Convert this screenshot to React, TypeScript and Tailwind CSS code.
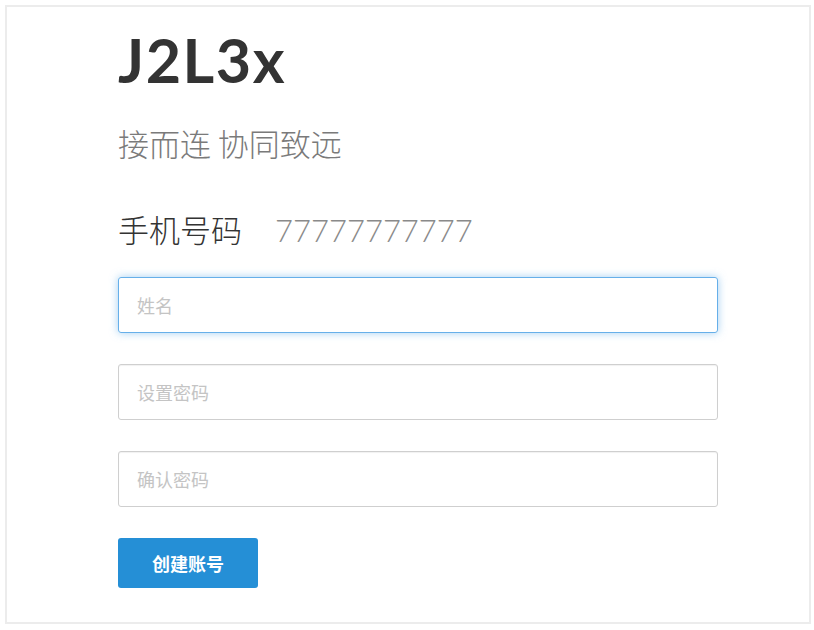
export default function App() {
  const fields = [
    { placeholder: "姓名", focused: true },
    { placeholder: "设置密码", focused: false },
    { placeholder: "确认密码", focused: false },
  ];

  return (
    <div className="w-[814px] h-[630px] bg-white p-[5px] font-['Lato','Noto_Sans_CJK_SC',sans-serif]">
      {/* Card */}
      <div className="h-[619px] w-[806px] border-2 border-[#ececec] pl-[111px] pt-[18px]">
        <h1 className="text-[61px] leading-[70px] font-bold text-[#333] tracking-[1.5px]">J2L3x</h1>

        <p className="mt-[30px] text-[31px] leading-[36px] text-[#7a7a7a] font-['Noto_Sans_CJK_SC',sans-serif] font-light">
          接而连 协同致远
        </p>

        <div className="mt-[50px] flex items-baseline gap-[33px]">
          <span className="text-[31px] leading-[36px] text-[#333] font-['Noto_Sans_CJK_SC',sans-serif] font-light">
            手机号码
          </span>
          <span className="text-[31px] leading-[36px] text-[#8a8a8a] font-light">77777777777</span>
        </div>

        <div className="mt-[29px] flex flex-col gap-[31px]">
          {fields.map((f, i) => (
            <input
              key={i}
              type={i === 0 ? "text" : "password"}
              placeholder={f.placeholder}
              className={
                f.focused
                  ? "w-[600px] h-[56px] rounded-[3px] border border-[#66afe9] px-[18px] text-[18px] outline-none shadow-[0_0_8px_rgba(102,175,233,0.6)] placeholder:text-[#c4c4c4] font-['Noto_Sans_CJK_SC',sans-serif]"
                  : "w-[600px] h-[56px] rounded-[3px] border border-[#cfcfcf] px-[18px] text-[18px] outline-none shadow-[inset_0_1px_1px_rgba(0,0,0,0.06)] placeholder:text-[#c4c4c4] font-['Noto_Sans_CJK_SC',sans-serif]"
              }
            />
          ))}
        </div>

        <button className="mt-[31px] w-[140px] h-[50px] rounded-[3px] bg-[#258fd6] text-white text-[18px] font-bold font-['Noto_Sans_CJK_SC',sans-serif]">
          创建账号
        </button>
      </div>
    </div>
  );
}
